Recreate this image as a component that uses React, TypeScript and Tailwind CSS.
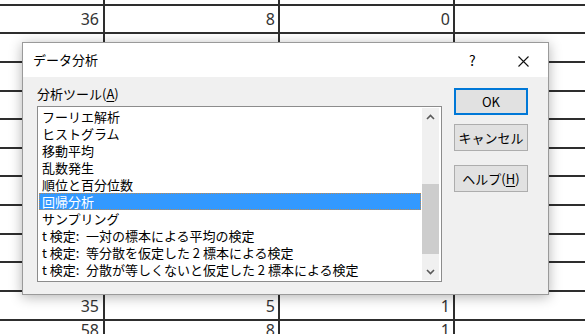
import React from "react";

const rowHeights = [4, 28, 29, 29, 28, 29, 28, 29, 29, 28, 29, 29, 20];
const rowData: Record<number, [string, string, string]> = {
  1: ["36", "8", "0"],
  2: ["35", "9", "1"],
  11: ["35", "5", "1"],
  12: ["58", "8", "1"],
};

const items = [
  "フーリエ解析",
  "ヒストグラム",
  "移動平均",
  "乱数発生",
  "順位と百分位数",
  "回帰分析",
  "サンプリング",
  "t 検定:\u2002一対の標本による平均の検定",
  "t 検定:\u2002等分散を仮定した 2 標本による検定",
  "t 検定:\u2002分散が等しくないと仮定した 2 標本による検定",
];

function Sheet() {
  return (
    <div className="flex flex-col" style={{ fontFamily: '"Noto Sans", "Open Sans", sans-serif' }}>
      {rowHeights.map((h, i) => {
        const d = rowData[i] || ["", "", ""];
        return (
          <div
            key={i}
            className={`flex shrink-0 ${i > 0 ? "border-t-2 border-[#2e2e2e]" : ""}`}
            style={{ height: h }}
          >
            <div className="w-[105px] shrink-0 border-r-2 border-[#2e2e2e] flex items-center justify-end pr-[4px] text-[16px] text-[#333] leading-none overflow-hidden">
              {d[0]}
            </div>
            <div className="w-[175px] shrink-0 border-r-2 border-[#2e2e2e] flex items-center justify-end pr-[3px] text-[16px] text-[#333] leading-none overflow-hidden">
              {d[1]}
            </div>
            <div className="w-[175px] shrink-0 border-r-2 border-[#2e2e2e] flex items-center justify-end pr-[3px] text-[16px] text-[#333] leading-none overflow-hidden">
              {d[2]}
            </div>
            <div className="flex-1" />
          </div>
        );
      })}
    </div>
  );
}

function Chevron({ up }: { up?: boolean }) {
  return (
    <svg width="9" height="6" viewBox="0 0 9 6">
      <polyline
        points={up ? "1,5 4.5,1.5 8,5" : "1,1 4.5,4.5 8,1"}
        fill="none"
        stroke="#5a5a5a"
        strokeWidth="1.6"
      />
    </svg>
  );
}

function Btn({ children, focus }: { children: React.ReactNode; focus?: boolean }) {
  return (
    <div
      className={`w-[74px] h-[27px] flex items-center justify-center text-[13px] text-black bg-[#e1e1e1] ${
        focus ? "border-2 border-[#0078d7]" : "border border-[#adadad]"
      }`}
    >
      {children}
    </div>
  );
}

function Dialog() {
  return (
    <div
      className="absolute left-[22px] top-[42px] w-[527px] h-[253px] bg-[#f0f0f0] border border-[#9a9a9a] shadow-[0_2px_12px_rgba(0,0,0,0.3)] flex flex-col"
      style={{ fontFamily: '"Noto Sans CJK JP", "Noto Sans", sans-serif' }}
    >
      <div className="h-[34px] bg-white flex items-center shrink-0 relative">
        <span className="pl-[10px] text-[13px] text-black">データ分析</span>
        <span className="absolute left-[446px] top-[10px] text-[14px] text-black leading-none">?</span>
        <svg className="absolute left-[495px] top-[13px]" width="11" height="11" viewBox="0 0 11 11">
          <path d="M0.5 0.5 L10.5 10.5 M10.5 0.5 L0.5 10.5" stroke="#111" strokeWidth="1.1" />
        </svg>
      </div>
      <div className="flex flex-1 pl-[14px]">
        <div className="flex flex-col pt-[7px]">
          <div className="h-[20px] text-[13px] text-black leading-[20px]">
            分析ツール(<span className="underline underline-offset-2">A</span>)
          </div>
          <div className="mt-[2px] w-[405px] h-[176px] bg-white border border-[#8c8c8c] flex">
            <div className="flex-1 flex flex-col pt-[1px] pl-[1px] pr-[1px]">
              {items.map((t, i) => (
                <div
                  key={i}
                  className={`h-[17px] shrink-0 flex items-center pl-[3px] text-[13px] whitespace-pre leading-none ${
                    i === 5
                      ? "bg-[#3399ff] text-white border border-dotted border-[#c08a50]"
                      : "text-black"
                  }`}
                >
                  {i === 5 ? <span className="-ml-[1px]">{t}</span> : t}
                </div>
              ))}
            </div>
            <div className="w-[17px] mr-[2px] my-[1px] bg-[#f0f0f0] flex flex-col items-center">
              <div className="h-[17px] flex items-center justify-center">
                <Chevron up />
              </div>
              <div className="h-[59px]" />
              <div className="w-[17px] h-[70px] bg-[#cdcdcd]" />
              <div className="flex-1" />
              <div className="h-[17px] flex items-center justify-center">
                <Chevron />
              </div>
            </div>
          </div>
        </div>
        <div className="flex flex-col pt-[11px] ml-[12px] gap-[9px]">
          <Btn focus>OK</Btn>
          <Btn>キャンセル</Btn>
          <div className="mt-[5px]">
            <Btn>
              ヘルプ(<span className="underline underline-offset-2">H</span>)
            </Btn>
          </div>
        </div>
      </div>
    </div>
  );
}

export default function App() {
  return (
    <div className="relative w-[585px] h-[334px] bg-white overflow-hidden">
      <Sheet />
      <Dialog />
    </div>
  );
}
